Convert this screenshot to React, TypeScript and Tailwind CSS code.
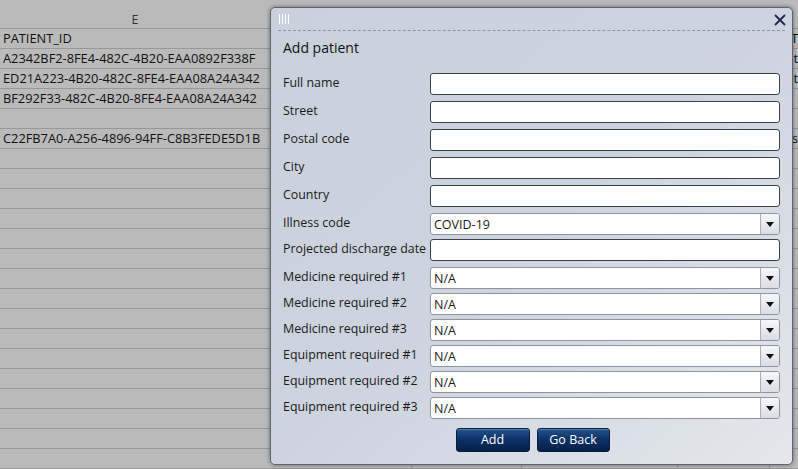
import React from "react";

const sheetRows: string[][] = [
  ["PATIENT_ID", "", "", "", "", "T"],
  ["A2342BF2-8FE4-482C-4B20-EAA0892F338F", "", "", "", "", "t"],
  ["ED21A223-4B20-482C-8FE4-EAA08A24A342", "", "", "", "", "t"],
  ["BF292F33-482C-4B20-8FE4-EAA08A24A342", "", "", "", "", ""],
  ["", "", "", "", "", ""],
  ["C22FB7A0-A256-4896-94FF-C8B3FEDE5D1B", "", "", "", "", "s"],
];
while (sheetRows.length < 22) sheetRows.push(["", "", "", "", "", ""]);

const colW = ["w-[270px]", "w-[142px]", "w-[110px]", "w-[156px]", "w-[92px]", "w-[28px]"];

type Field = { label: string; kind: "text" | "combo"; value?: string; h: string };
const fields: Field[] = [
  { label: "Full name", kind: "text", h: "h-[28px]" },
  { label: "Street", kind: "text", h: "h-[28px]" },
  { label: "Postal code", kind: "text", h: "h-[28px]" },
  { label: "City", kind: "text", h: "h-[28px]" },
  { label: "Country", kind: "text", h: "h-[28px]" },
  { label: "Illness code", kind: "combo", value: "COVID-19", h: "h-[26px]" },
  { label: "Projected discharge date", kind: "text", h: "h-[28px]" },
  { label: "Medicine required #1", kind: "combo", value: "N/A", h: "h-[26px]" },
  { label: "Medicine required #2", kind: "combo", value: "N/A", h: "h-[26px]" },
  { label: "Medicine required #3", kind: "combo", value: "N/A", h: "h-[26px]" },
  { label: "Equipment required #1", kind: "combo", value: "N/A", h: "h-[26px]" },
  { label: "Equipment required #2", kind: "combo", value: "N/A", h: "h-[26px]" },
  { label: "Equipment required #3", kind: "combo", value: "N/A", h: "h-[31px]" },
];

function Combo({ value }: { value?: string }) {
  return (
    <div className="flex h-[22px] w-[350px] rounded-[3px] border border-[#8d949f] bg-white">
      <div className="flex-1 pl-[3px] pt-[2px] text-[12.5px] leading-[18px] text-[#1a1a1a]">{value}</div>
      <div className="flex w-[19px] items-center justify-center rounded-r-[2px] border-l border-[#a9afb8] bg-linear-to-b from-[#f6f7f9] to-[#d9dde3]">
        <svg width="8" height="5" viewBox="0 0 8 5"><path d="M0 0h8L4 5z" fill="#111" /></svg>
      </div>
    </div>
  );
}

export default function App() {
  return (
    <div className="relative h-[469px] w-[798px] overflow-hidden bg-[#bababa] text-[#111]" style={{ fontFamily: "'Open Sans', 'Noto Sans', sans-serif" }}>
      {/* spreadsheet behind */}
      <div className="flex h-[29px] items-end border-b border-[#989898]">
        <div className="w-[270px] pb-[-1px] text-center text-[12.5px] leading-[16px] text-[#333]">E</div>
      </div>
      {sheetRows.map((r, i) => (
        <div key={i} className="flex h-[20px] border-b border-[#989898]">
          {r.map((c, j) => (
            <div key={j} className={`${colW[j]} shrink-0 overflow-hidden whitespace-nowrap border-[#989898] px-[3px] text-[12.8px] leading-[19px] ${j > 0 && j < 5 ? "border-r" : ""} ${j === 5 ? "text-right !px-0" : ""}`}>
              {c}
            </div>
          ))}
        </div>
      ))}

      {/* dialog */}
      <div className="absolute left-[270px] top-[7px] flex h-[458px] w-[523px] flex-col rounded-[5px] border border-[#5d6570] bg-linear-to-br from-[#c9d1dd] via-[#cdd4df] to-[#e4e7ec] shadow-[0_0_4px_rgba(0,0,0,0.45)]">
        <div className="mx-[7px] flex h-[23px] shrink-0 items-center justify-between border-b border-dashed border-[#8c95a3]">
          <div className="flex gap-[2px] pl-[1px]">
            <div className="h-[10px] w-[1px] bg-white" />
            <div className="h-[10px] w-[1px] bg-white" />
            <div className="h-[10px] w-[1px] bg-white" />
            <div className="h-[10px] w-[1px] bg-white" />
          </div>
          <svg width="12" height="12" viewBox="0 0 12 12" className="-mr-[1px] mt-[1px]">
            <path d="M1 1L11 11M11 1L1 11" stroke="#1c2a4c" strokeWidth="1.8" />
          </svg>
        </div>
        <div className="flex flex-col px-[12px]">
          <div className="pt-[7px] text-[14px] leading-[20px] text-[#111]">Add patient</div>
          <div className="mt-[15px] flex flex-col">
            {fields.map((f) => (
              <div key={f.label} className={`flex ${f.h}`}>
                <div className="w-[147px] shrink-0 pt-[1px] text-[12.4px] leading-[18px] text-[#1a1a1a]">{f.label}</div>
                {f.kind === "text" ? (
                  <div className="h-[22px] w-[351px] rounded-[3px] border border-[#3c4149] bg-white" />
                ) : (
                  <Combo value={f.value} />
                )}
              </div>
            ))}
          </div>
          <div className="flex justify-center gap-[7px] pl-[2px]">
            <button className="h-[24px] w-[74px] rounded-[3px] border border-[#0a1d3a] bg-linear-to-b from-[#23538c] via-[#0b3066] to-[#052048] text-[12.5px] text-white shadow-[inset_0_1px_0_rgba(255,255,255,0.25)]">Add</button>
            <button className="h-[24px] w-[73px] rounded-[3px] border border-[#0a1d3a] bg-linear-to-b from-[#23538c] via-[#0b3066] to-[#052048] text-[12.5px] text-white shadow-[inset_0_1px_0_rgba(255,255,255,0.25)]">Go Back</button>
          </div>
        </div>
      </div>
    </div>
  );
}
